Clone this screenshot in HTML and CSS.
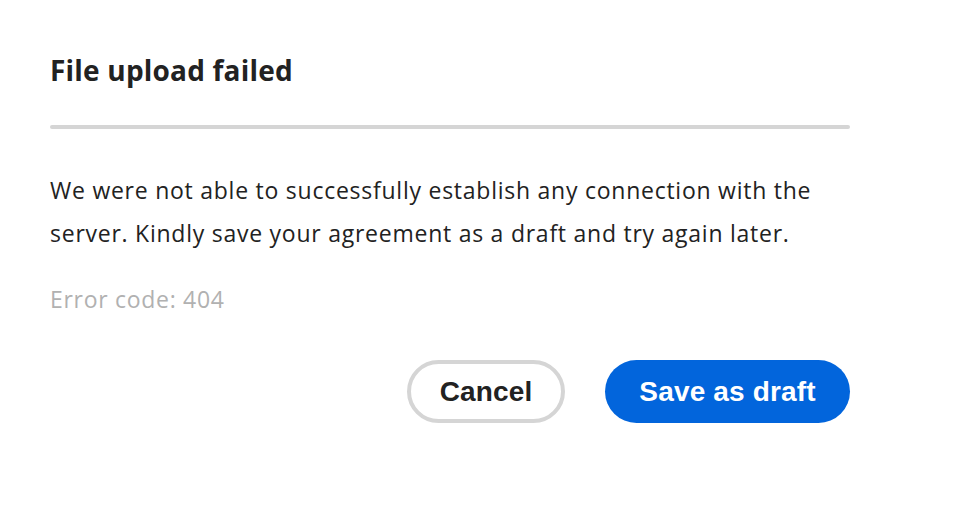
FILE: index.html
```html
<!DOCTYPE html>
<html>
<head>
<meta charset="utf-8">
<link rel="stylesheet" href="styles.css">
</head>
<body>
<section class="dialog">
  <h1 class="title">File upload failed</h1>
  <hr class="divider">
  <p class="message">We were not able to successfully establish any connection with the server. Kindly save your agreement as a draft and try again later.</p>
  <p class="code">Error code: 404</p>
  <div class="actions">
    <button class="btn btn-secondary">Cancel</button>
    <button class="btn btn-primary">Save as draft</button>
  </div>
</section>
</body>
</html>
```
FILE: styles.css
```css
html, body {
  margin: 0;
  padding: 0;
  background: #ffffff;
}
.dialog {
  width: 800px;
  padding: 50px 0 0 50px;
  font-family: "Open Sans", Lato, sans-serif;
  color: #222222;
}
.title {
  margin: 0;
  font-size: 28px;
  font-weight: 700;
  letter-spacing: 0.2px;
  line-height: 40px;
  color: #222222;
}
.divider {
  margin: 35px 0 0;
  border: none;
  height: 4px;
  border-radius: 2px;
  background: #d5d5d5;
}
.message {
  margin: 40px 0 0;
  font-size: 23px;
  letter-spacing: 0.75px;
  line-height: 43px;
  color: #222222;
}
.code {
  margin: 29px 0 0;
  font-size: 23px;
  letter-spacing: 0.7px;
  line-height: 30px;
  color: #b1b1b1;
}
.actions {
  display: flex;
  justify-content: flex-end;
  gap: 40px;
  margin-top: 46px;
}
.btn {
  height: 63px;
  border-radius: 32px;
  font-family: "Liberation Sans", Arial, sans-serif;
  font-weight: 700;
  font-size: 28px;
  letter-spacing: 0.15px;
  padding: 0 16px;
  cursor: pointer;
}
.btn-secondary {
  width: 158px;
  background: #ffffff;
  border: 4px solid #d5d5d5;
  color: #222222;
}
.btn-primary {
  width: 245px;
  background: #0265dc;
  border: none;
  color: #ffffff;
}
```
